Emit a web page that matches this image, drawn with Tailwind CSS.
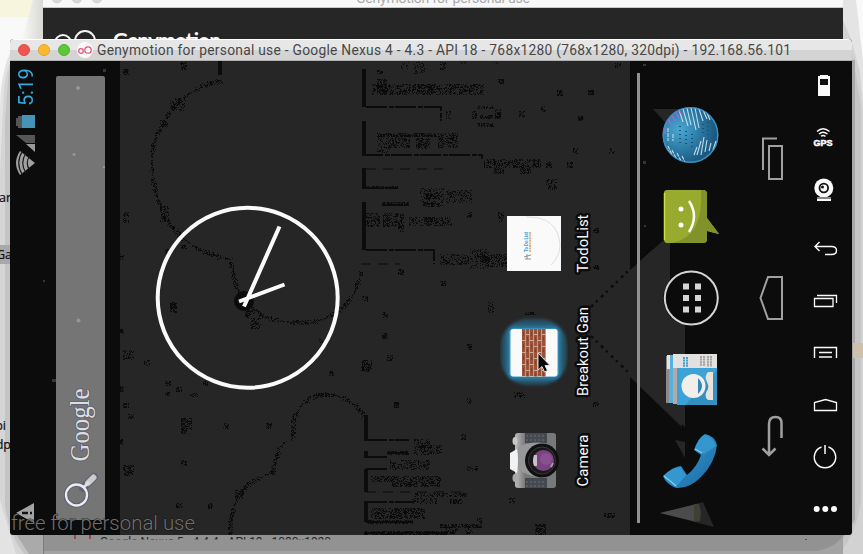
<!DOCTYPE html>
<html lang="en">
<head>
<meta charset="utf-8">
<title>Genymotion for personal use</title>
<script src="https://cdn.jsdelivr.net/npm/@tailwindcss/browser@4"></script>
</head>
<body class="overflow-hidden">
<main class="relative w-[863px] h-[554px] overflow-hidden bg-[#f9f9f9] font-['Roboto','Liberation_Sans',sans-serif]">

  <!-- desktop behind the windows, with stepped shadows -->
  <svg class="absolute inset-0" width="863" height="554" viewBox="0 0 863 554">
    <defs>
      <linearGradient id="fade" x1="0" x2="1"><stop offset="0" stop-color="#f8f8f4"/><stop offset="1" stop-color="#d8d8d5"/></linearGradient>
    </defs>
    <path d="M0 0H36L33 17H0Z" fill="#f8f5de"/>
    <path d="M33 0H43V39H22Z" fill="url(#fade)"/>
    <path d="M20 39Q7 52 3 76Q0 90 0 110V554H43V39Z" fill="#e3e3e3"/>
    <path d="M22 39Q7 58 4 90L0 170V500L16 554H43V39Z" fill="#d5d5d5"/>
    <path d="M5 120V505Q9 535 24 554H43V70H9Z" fill="#c4c4c4"/>
    <path d="M10 525L29 554H43V535Z" fill="#aaa"/>
    <path d="M843 0H856L863 60V554H843Z" fill="#e4e4e4"/>
    <path d="M843 20L851 39L860 72L863 110V554H843Z" fill="#d2d2d2"/>
    <path d="M852 52L861 105V500Q857 530 843 549Z" fill="#c6c6c6"/>
    <path d="M852 60H855V520L843 538Z" fill="#a9a9a9"/>
    <rect x="853" y="343" width="10" height="15" fill="#cdc1ac"/>
    <rect x="0" y="245" width="10" height="19" fill="#a8a8a8"/>
    <g font-family="Open Sans, sans-serif" font-size="12.500" fill="#0c0c0c" stroke="#0c0c0c" stroke-width=".2">
      <text x="11" y="202" text-anchor="end">ar</text><text x="12" y="259" text-anchor="end">Ga</text>
      <text x="6" y="430" text-anchor="end">pi</text><text x="11" y="449" text-anchor="end">dp</text>
    </g>
  </svg>

  <!-- launcher window in the background -->
  <section class="absolute left-[43px] top-0 w-[800px] h-[554px] flex flex-col bg-[#262626]">
    <header class="relative h-2 shrink-0 bg-[#f8f8f8] border-b border-[#c8c8c8] overflow-hidden">
      <svg class="block" width="800" height="8" viewBox="43 0 800 8">
        <g fill="#d8d8d8" stroke="#c4c4c4" stroke-width=".6"><circle cx="57" cy="-2" r="5"/><circle cx="77" cy="-2" r="5"/><circle cx="97" cy="-2" r="5"/></g>
        <text x="356" y="3" font-size="14" fill="#aaa" textLength="174">Genymotion for personal use</text>
      </svg>
    </header>
    <svg class="block shrink-0" width="800" height="31" viewBox="43 8 800 31">
      <g fill="none" stroke="#f5f5f5" stroke-width="2"><circle cx="63" cy="43" r="8"/><circle cx="85" cy="41" r="10"/></g>
      <text x="113" y="47.500" font-family="Lato, sans-serif" font-weight="700" font-size="21" fill="#f7f7f7" textLength="108">Genymotion</text>
    </svg>
    <div class="grow"></div>
    <div class="h-[19px] bg-[#929292] border-l border-[#7d7d7d]">
      <svg class="block" width="799" height="19" viewBox="44 535 799 19">
        <rect x="43" y="551" width="800" height="3" fill="#a3a3a3"/>
        <path d="M843 535Q835 551 800 553H843Z" fill="#a3a3a3"/>
        <path d="M75 535v4M90 535v4" stroke="#a3454f" stroke-width="2"/>
        <svg x="43" y="535" width="400" height="4.500" viewBox="43 535 400 4.500"><text x="100" y="546" font-size="12" fill="#252525" textLength="231">Google Nexus 5 - 4.4.4 - API 19 - 1080x1920</text></svg>
        <rect x="805" y="539" width="2" height="1" fill="#555"/>
      </svg>
    </div>
  </section>

  <!-- emulator window -->
  <section class="absolute left-[10px] top-[39px] w-[842px] h-[496px] flex flex-col rounded-t-[4px] rounded-b-[3px] overflow-hidden bg-[#0c0c0c]">
    <header class="h-[22px] shrink-0 flex items-center pl-[8px] border-t border-white border-b border-b-[#b1b1b1] bg-linear-to-b from-[#e7e7e7] from-50% to-[#d4d4d4] to-50%">
      <div class="flex gap-2">
        <i class="size-3 rounded-full bg-[#f05650] border border-[#df4a45]"></i>
        <i class="size-3 rounded-full bg-[#fbb92f] border border-[#e4a42c]"></i>
        <i class="size-3 rounded-full bg-[#5dc83a] border border-[#50b230]"></i>
      </div>
      <svg class="ml-[7px] shrink-0" width="16" height="16" viewBox="0 0 16 16"><circle cx="8" cy="8" r="8" fill="#fafafa"/><g fill="none" stroke="#dc5a7d" stroke-width="1.300"><circle cx="4" cy="9" r="2.300"/><circle cx="11" cy="8" r="3.200"/></g></svg>
      <svg class="ml-[4px] block shrink-0" width="710" height="20" viewBox="97 40 710 20"><text x="97" y="55" font-size="13.800" fill="#474747" textLength="694">Genymotion for personal use - Google Nexus 4 - 4.3 - API 18 - 768x1280 (768x1280, 320dpi) - 192.168.56.101</text></svg>
    </header>

    <div class="relative grow flex">
      <!-- wallpaper -->
      <svg class="absolute inset-0" width="842" height="474" viewBox="10 61 842 474">
        <rect x="120" y="61" width="510" height="474" fill="#262626"/>
        <path d="M630 269L664 240H670V318H685V430L630 377Z" fill="#262626"/>
        <path d="M653 109H690V150ZM675 440L685 442V458Z" fill="#262626"/>
        <path d="M660 513L703 502L714 527Z" fill="#262626"/><path d="M660 513L693 505L698 505V521L693 521Z" fill="#4b4b4b"/><path d="M694 504h5l2 8-1 9-6 1Z" fill="#3f3f34"/>
        <g fill="none" stroke="#0b0b0b">
          <path stroke-width="4" d="M364 69V107M364 121V155M364 168V188M364 202V250M366 415V441M366 451V458M366 469V492M366 501V522M220 61V75"/>
          <path stroke-width="2" stroke-dasharray="21 2 5 1" d="M366 107H441V121M362 155H482V159M362 188H398M382 205H409M366 250H434V264M366 440H409M387 453H409M366 457H388M366 469H388M366 502H414M366 522H413M364 533H445"/>
          <path stroke-width="1" stroke-dasharray="10 7" d="M366 169H443M361 264H400M366 492H467"/>
        </g>
        <g fill="none" id="contours">
          <path d="M222 80Q182 88 165 120C149 143 149 164 155 190Q160 212 169 223Q185 243 205 252Q220 257 230 259L233 275L241 298C260 321 287 325 315 321Q353 311 361 271"/>
          <path d="M293 438V420C299 402 311 394 328 394Q354 396 366 420"/>
          <path d="M230 535C229 508 238 486 260 477L273 472Q276 448 286 440"/>
        </g>
        <path fill="none" stroke="#0b0b0b" stroke-width="2.500" stroke-dasharray="3 4 2 5" d="M591 307L630 269M591 336L630 374"/>
        <path fill="none" stroke="#0b0b0b" stroke-width="2" d="M653 247L630 269M682 425L685 430"/>
        <circle cx="244" cy="301" r="10" fill="#0b0b0b"/>
        <path id="grain" fill="#0b0b0b" shape-rendering="crispEdges"/>
        <g fill="#353535"><path d="M103 69h3v3h-3zM52 379h4v3h-4zM643 64h3v2h-3zM643 161h3v3h-3zM43 280h2v2h-2zM644 225h2v2h-2z"/></g>
      </svg>

      <!-- status bar -->
      <aside class="relative w-[46px] flex flex-col pl-[5px] pt-[6px] items-start">
        <time class="h-[40px] w-[22px] flex items-center justify-center [writing-mode:vertical-rl] rotate-180 text-[20px] leading-[22px] text-[#35a9da] tracking-[-0.3px]">5:19</time>
        <svg class="mt-[7px]" width="22" height="64" viewBox="15 114 22 64">
          <path d="M16 118h2v-2h4v12h-4v-2h-2z" fill="#555"/><rect x="22" y="115" width="13" height="13" fill="#4594b8"/>
          <path d="M16 135H35V143H26Z" fill="#565656"/><path d="M26 144H35V152Z" fill="#999"/>
          <path d="M20 151Q12 163 20 175L35 163Z" fill="#a0a0a0"/>
          <g fill="none" stroke="#1a1a1a" stroke-width="1.200"><path d="M22.500 151Q15 163 22.500 175M26 153Q19.500 163 26 173M29.500 156Q25 163 29.500 170"/></g>
        </svg>
        <svg class="mt-[323px]" width="20" height="22" viewBox="15 501 20 22"><path d="M16 513L34 503V523Z" fill="#a3a3a3"/><path d="M22 513H28M30 513H32" stroke="#111" stroke-width="2.500"/></svg>
      </aside>

      <!-- search bar -->
      <div class="relative w-[49px] h-[444px] mt-[15px] bg-[#757575] rounded-t-[2px]">
        <svg class="block" width="49" height="444" viewBox="56 76 49 444">
          <g fill="#969696"><circle cx="78" cy="88" r="2"/><circle cx="74" cy="154.500" r="1.600"/><circle cx="78.500" cy="320.500" r="2"/><rect x="103" y="166" width="2" height="2"/></g>
          <g transform="translate(88.500 461.500) rotate(-90)"><text font-family="Liberation Serif, serif" font-size="27" fill="#dedede" stroke="#5e6277" stroke-width="2" paint-order="stroke" textLength="73" lengthAdjust="spacingAndGlyphs">Google</text></g>
          <path d="M83 488L94 477" stroke="#5e6277" stroke-width="8" stroke-linecap="round"/><circle cx="76.500" cy="495" r="10.500" fill="none" stroke="#5e6277" stroke-width="4.500"/>
          <path d="M88 483L93.500 477.500" stroke="#ccc" stroke-width="6" stroke-linecap="round"/><path d="M84 487L89 482" stroke="#ddd" stroke-width="3"/><circle cx="76.500" cy="495" r="10.500" fill="none" stroke="#ededed" stroke-width="2.300"/>
        </svg>
      </div>

      <!-- home screen -->
      <div class="relative ml-[15px] w-[510px] flex">
        <svg class="ml-[35px] mt-[144px]" width="186" height="186" viewBox="155 205 186 186"><g fill="none" stroke="#fafafa"><circle cx="247.700" cy="297.800" r="90" stroke-width="4"/><path stroke-width="4" d="M244 306.500L279.500 226.500M239 301.500L284.500 284.500"/></g></svg>
        <div class="ml-[159px] mt-[155px] flex flex-col w-[68px]">
          <svg class="ml-[7px] block" width="56" height="56" viewBox="507 216 56 56">
            <rect x="507" y="216" width="54" height="55" fill="#fafafa"/><path d="M526 217Q558 216 560 245Q560 256 551 265" fill="none" stroke="#dedede"/>
            <text transform="translate(527.500 252) rotate(-90)" font-size="4.500" font-weight="700" fill="#31a1d8" textLength="20" lengthAdjust="spacingAndGlyphs">To Do List</text><path d="M530 232V252" stroke="#e7ae89" stroke-width="2" stroke-dasharray="2 .6"/>
            <path d="M524 257l7-2M525 259h6M527 254v5" stroke="#92918a" stroke-width="1"/>
          </svg>
          <svg class="mt-[44px] block" width="68" height="72" viewBox="500 316 68 72">
            <defs>
              <filter id="b"><feGaussianBlur stdDeviation="1.500"/></filter>
              <pattern id="brick" x="522" y="329" width="8" height="12" patternUnits="userSpaceOnUse"><rect width="8" height="12" fill="#c9ab9c"/><path d="M0 0h3.200v11h-3.200zM4 0h3.200v5h-3.200zM4 6h3.200v6h-3.200z" fill="#9b5138"/><path d="M1 3h1v4h-1zM5 8h1v3h-1z" fill="#804130"/></pattern>
            </defs>
            <rect x="501" y="319" width="66" height="66" rx="26" fill="#264e61" filter="url(#b)"/><rect x="505" y="324" width="58" height="57" rx="15" fill="#286381" filter="url(#b)"/><rect x="508" y="327" width="52" height="52" rx="6" fill="#2f7ca3" filter="url(#b)"/>
            <rect x="509.500" y="328.500" width="49" height="48.500" rx="4" fill="#42a1cd"/><rect x="510.500" y="329" width="47" height="47.500" rx="3" fill="#fafafa"/><rect x="522" y="329" width="24" height="47.500" fill="url(#brick)"/>
            <path d="M538 353V370L542 366.500L544.500 372L547.500 370.500L545 365.500H550Z" fill="#090909" stroke="#eee" stroke-width=".9"/>
          </svg>
          <svg class="mt-[44px] ml-[7px] block" width="56" height="58" viewBox="507 432 56 58">
            <defs><linearGradient id="cam"><stop offset="0" stop-color="#bcbcbc"/><stop offset=".25" stop-color="#777"/><stop offset="1" stop-color="#77797c"/></linearGradient></defs>
            <rect x="515" y="433" width="41" height="55" rx="3" fill="url(#cam)"/><path d="M525 433h22v10h-22zM525 478h22v10h-22z" fill="#44484f"/>
            <path d="M526 436h20M526 440h20M526 482h20M526 486h20" stroke="#6b7180" stroke-dasharray="2 2"/>
            <ellipse cx="515" cy="441" rx="2.500" ry="4" fill="#c7c7c7"/><ellipse cx="515" cy="478" rx="2.500" ry="4" fill="#aaa"/>
            <path d="M518 447Q530 441 545 443V478Q527 477 517 468Z" fill="#96989a"/><path d="M510 453L517 449Q519 460 517 473L510 469Z" fill="#f2f2f2"/>
            <circle cx="542" cy="460.500" r="17" fill="#101010"/><circle cx="542" cy="460.500" r="13.500" fill="#191919" stroke="#3a3a3a"/><circle cx="543.500" cy="460.500" r="10.500" fill="#7a4380"/><circle cx="546" cy="459" r="6" fill="#88508f"/><path d="M534 455h3v11h-3q-2-5 0-11" fill="#c9bfca"/><path d="M551 467l2-4" stroke="#a79bb0" stroke-width="2"/>
          </svg>
        </div>
        <svg class="absolute left-[452px] top-[144px]" width="24" height="290" viewBox="572 205 24 290">
          <g font-size="15" fill="#fafafa" stroke="#0b0b0b" stroke-width="5" stroke-linejoin="round" paint-order="stroke">
            <text transform="translate(587.500 272.500) rotate(-90)" textLength="58" lengthAdjust="spacingAndGlyphs">TodoList</text>
            <text transform="translate(587.500 396) rotate(-90)" textLength="89" lengthAdjust="spacingAndGlyphs">Breakout Gan</text>
            <text transform="translate(587.500 486.500) rotate(-90)" textLength="52" lengthAdjust="spacingAndGlyphs">Camera</text>
          </g>
        </svg>
      </div>

      <!-- favourites tray -->
      <div class="relative w-[115px] flex pl-[7px] pt-[12px]">
        <div class="w-[3px] h-[450px] bg-[#929292]"></div>
        <div class="ml-[20px] pt-[32px] flex flex-col">
          <svg class="block" width="62" height="62" viewBox="660 105 62 62">
            <defs><radialGradient id="gl" cx=".3" cy=".4" r=".75"><stop offset="0" stop-color="#4ba9d4"/><stop offset=".5" stop-color="#2b79a4"/><stop offset="1" stop-color="#164b70"/></radialGradient><clipPath id="gc"><circle cx="690.500" cy="135" r="27"/></clipPath></defs>
            <circle cx="690.500" cy="135" r="28" fill="url(#gl)"/><circle cx="690.500" cy="135" r="27.200" fill="none" stroke="#3c8fbe" stroke-width="1.500"/>
            <g clip-path="url(#gc)" fill="none" stroke="#c3dcea" stroke-width="1.100">
              <path d="M683 109l5 17M687 108l4 17M691 108l5 22M695 108l4 20M699 109l4 12M703 110l4 9M707 113l3 7M679 110l4 12"/>
              <path d="M665 146l5 7M668 146l5 11M672 150l5 10M677 153l4 8M682 156l3 6M668 128v13M673 134v7" stroke-dasharray="4 1"/>
              <path d="M694 155l3-8M697 155l4-14M701 155l3-18M705 152l2-12M709 151l2-8M713 150l3-9"/>
              <path stroke="#b964d6" d="M667 118l4 6M671 114l4 7M675 111l4 7M679 110l3 5M665 126v8"/>
            </g>
            <path d="M680 126v18M686 131v16M692 134v14M708 122v15M703 124v10" stroke="#15547c" stroke-width="2" stroke-dasharray="1 3"/>
          </svg>
          <svg class="mt-[21px] block" width="62" height="57" viewBox="660 188 62 57">
            <path d="M667 190H703Q707 190 707 194V218L719 234L707 231V239Q707 243 703 243H667Q664 243 664 239V193Q664 190 667 190Z" fill="#98ab2e"/>
            <path d="M703 190Q707 190 707 194V218L719 234L707 231V239Q707 243 703 243H672Q704 237 701 190Z" fill="#82922b"/><path d="M664.500 193V240" stroke="#c8e044" stroke-width="1.500"/>
            <circle cx="681" cy="209" r="2.500" fill="#fff"/><circle cx="681" cy="225" r="2.500" fill="#fff"/><path d="M689 201Q699 216 689 232" fill="none" stroke="#fff" stroke-width="2.500"/>
          </svg>
          <svg class="mt-[24px] block" width="62" height="59" viewBox="660 269 62 59">
            <circle cx="691.300" cy="298" r="28" fill="#0b0b0b"/><circle cx="691.300" cy="298" r="26.500" fill="none" stroke="#d5d5d5" stroke-width="2"/>
            <path d="M683 283.500h6v6h-6zM695 283.500h6v6h-6zM683 295h6v6h-6zM695 295h6v6h-6zM683 306.500h6v6h-6zM695 306.500h6v6h-6z" fill="#d5d5d5"/>
          </svg>
          <svg class="mt-[24px] block" width="62" height="56" viewBox="660 352 62 56">
            <path d="M666 356h4v47h-4z" fill="#8f8a88"/><path d="M669 355h5v48h-5z" fill="#55b2dd"/><path d="M673 354h5v50h-5z" fill="#b6a8a4"/><path d="M667 355h3v14h-3zM673 354h7v14h-7z" fill="#e3e3e3"/>
            <path d="M677 354H717V405H677Z" fill="#3da3d7"/><path d="M677 354H717V368H677Z" fill="#e2e1df"/><path d="M717 370V405H685Z" fill="#3590c2"/>
            <path d="M684 357V367M687 357V367" stroke="#2c92c8" stroke-width="1.700" stroke-dasharray="2 .6"/><path d="M701 356V366M704 356V366M708 356V367M711 356V367" stroke="#77797a" stroke-width="1.200" stroke-dasharray="2 .6"/>
            <circle cx="693.500" cy="386" r="12" fill="#f0efeb"/><path d="M698 378Q706 386 698 394Z" fill="#3589b8"/><path d="M708 372H713V400H708Q703 396 708 389Q709 386 707 382Q704 376 708 372" fill="#e7e2da"/>
          </svg>
          <svg class="mt-[24px] block" width="62" height="60" viewBox="660 432 62 60">
            <defs><linearGradient id="ph" x1="0" y1="0" x2="1" y2="1"><stop offset="0" stop-color="#51bdea"/><stop offset=".5" stop-color="#2984bd"/><stop offset="1" stop-color="#1e6aa3"/></linearGradient></defs>
            <path d="M705 434Q715 436 717 445Q715 463 701 477Q689 489 676 488Q666 484 663 476Q672 467 681 466L687 475Q697 467 701 455L694 450Q698 438 705 434Z" fill="url(#ph)"/>
            <path d="M695 449Q699 437 705 435Q713 437 716 446L704 454ZM664 476Q672 468 680 467L686 475L676 487Z" fill="#3597d0"/><path d="M664 476L676 486M695 449L702 453" stroke="#79d3f2" stroke-width="1.300"/>
          </svg>
        </div>
      </div>

      <!-- device navigation -->
      <nav class="relative w-[52px] flex flex-col items-center pt-[75px]">
        <svg class="block" width="26" height="46" viewBox="758 136 26 46"><path d="M763 170V138.500H777M769 146H782V179H769Z" fill="none" stroke="#a0a0a0" stroke-width="2"/></svg>
        <svg class="mt-[92px] block" width="28" height="48" viewBox="757 274 28 48"><path d="M768 277H782V319H768L760.500 298Z" fill="none" stroke="#a0a0a0" stroke-width="2"/></svg>
        <svg class="mt-[92px] block" width="26" height="46" viewBox="758 414 26 46"><path d="M781.500 438V423Q781.500 417 775.500 417Q769 417 769 424V455M762.500 448.500L769 455L775.500 448.500" fill="none" stroke="#a0a0a0" stroke-width="2.500"/></svg>
      </nav>

      <!-- emulator toolbar -->
      <aside class="relative grow flex flex-col items-center pt-[13px]">
        <svg class="block" width="32" height="24" viewBox="809 74 32 24"><path d="M820 75h8v1h2v20h-12v-20h2z" fill="#fafafa"/><rect x="820" y="79" width="8" height="6" fill="#101010"/></svg>
        <svg class="mt-[28px] block" width="32" height="22" viewBox="809 126 32 22"><g fill="none" stroke="#fafafa" stroke-width="1.500"><path d="M817 131.500Q823 126 829.500 131.500M819 134Q823 130.500 827.500 134M821 136.300Q823 134.500 825.500 136.300"/></g><text x="813.500" y="145.500" font-family="Liberation Sans" font-size="8.500" font-weight="700" fill="#fafafa" stroke="#fafafa" stroke-width=".5" textLength="19" lengthAdjust="spacingAndGlyphs">GPS</text></svg>
        <svg class="mt-[29px] block" width="32" height="26" viewBox="809 177 32 26"><circle cx="823.800" cy="188" r="9.500" fill="#fafafa"/><circle cx="823.800" cy="188" r="4.300" fill="none" stroke="#111" stroke-width="1.800"/><circle cx="822.500" cy="187" r="1.500" fill="#111"/><path d="M817 197H831V201H817Z" fill="#fafafa"/><path d="M816 198H832" stroke="#111"/></svg>
        <svg class="mt-[36px] block" width="32" height="20" viewBox="809 239 32 20"><path d="M815 246.500H831.500Q836.500 246.500 836.500 250.500Q836.500 254.500 831.500 254.500H825M819.500 242L815 246.500L819.500 251" fill="none" stroke="#fafafa" stroke-width="1.400"/></svg>
        <svg class="mt-[34px] block" width="32" height="18" viewBox="809 293 32 18"><path d="M814.500 298.500H833V306.500H814.500ZM817 295.500H836.500V303" fill="none" stroke="#fafafa" stroke-width="1.300"/></svg>
        <svg class="mt-[33px] block" width="32" height="18" viewBox="809 344 32 18"><path d="M814.500 358V347.500H836.500V358M819 352.500H832M819 357H832" fill="none" stroke="#fafafa" stroke-width="1.400"/></svg>
        <svg class="mt-[34px] block" width="32" height="20" viewBox="809 396 32 20"><path d="M814.500 410.500V402.500L825.500 399.500L836.500 402.500V410.500Z" fill="none" stroke="#fafafa" stroke-width="1.300"/></svg>
        <svg class="mt-[27px] block" width="32" height="28" viewBox="809 443 32 28"><path d="M821.500 447A10.700 10.700 0 1 0 828.500 447M825 445V454" fill="none" stroke="#fafafa" stroke-width="1.500"/></svg>
        <svg class="mt-[32px] block" width="32" height="12" viewBox="809 503 32 12"><g fill="#fafafa"><circle cx="816.700" cy="509" r="3"/><circle cx="825.300" cy="509" r="3"/><circle cx="834" cy="509" r="3"/></g></svg>
      </aside>

      <svg class="absolute left-0 top-[445px]" width="220" height="29" viewBox="10 506 220 29"><text x="11" y="530" font-size="20" font-weight="300" fill="#707070" stroke="#0b0b0b" stroke-width="1.500" stroke-opacity=".5" paint-order="stroke" textLength="184" lengthAdjust="spacingAndGlyphs">free for personal use</text></svg>
    </div>
  </section>
</main>
<script>
  // Speckled wallpaper patches: x, y, width, height, density
  const patches = [
    [372,84,112,11,.42],[377,79,10,15,.6],[417,84,18,10,.45],[377,70,6,4,.6],[401,62,8,7,.3],[414,62,11,12,.35],[440,62,6,8,.4],[460,61,7,3,.4],[494,61,5,3,.5],
    [477,106,17,3,.5],[472,111,5,8,.5],[495,109,6,10,.6],[480,115,13,4,.6],[477,123,17,4,.6],[446,111,5,8,.25],[519,111,6,6,.5],[498,79,6,5,.6],[557,90,6,6,.6],[541,106,5,6,.5],
    [377,133,60,4,.65],[377,137,13,16,.3],[390,137,20,11,.4],[416,138,14,11,.5],[438,133,20,15,.45],[484,159,57,9,.42],[493,168,11,6,.6],[520,168,11,6,.5],[546,162,6,6,.5],[567,162,6,6,.5],[546,179,11,6,.5],[573,148,5,6,.6],
    [362,186,36,3,.55],[382,202,27,4,.6],[420,188,24,18,.25],[425,193,14,6,.65],[424,203,16,4,.5],[446,190,26,13,.35],[362,213,18,14,.4],[383,213,21,14,.45],[398,226,6,6,.6],[409,217,43,9,.35],[425,217,8,5,.7],
    [440,254,29,11,.4],[470,249,19,20,.3],[480,256,10,6,.7],[490,254,17,13,.45],[398,269,6,6,.6],[440,281,6,5,.6],[362,296,6,6,.5],[488,302,6,11,.5],[467,212,5,6,.6],[498,212,6,10,.5],
    [382,312,6,6,.5],[382,333,6,6,.6],[387,355,6,6,.5],[362,360,10,10,.45],[467,344,5,6,.6],[524,312,12,3,.5],
    [414,439,16,16,.35],[419,445,7,3,.8],[430,445,12,9,.4],[387,451,22,4,.5],[390,460,40,10,.35],[371,476,70,6,.42],[392,482,49,5,.5],[412,493,55,4,.4],[412,498,25,6,.35],[450,499,13,5,.6],[371,508,54,11,.48],[366,520,47,4,.45],[440,524,42,4,.6],[446,528,12,6,.4],[465,528,8,6,.4],[535,524,11,11,.55],[364,531,84,4,.65],
    [394,402,5,6,.8],[467,398,5,6,.5],[514,392,11,6,.4],[461,434,5,6,.6],[467,466,11,5,.6],[509,498,6,6,.5],[477,518,5,6,.5],[361,366,10,6,.5],[318,393,18,4,.5],[329,371,5,5,.5],
    [123,69,6,6,.6],[180,62,7,8,.55],[170,98,15,13,.3],[160,120,8,7,.5],[123,212,6,11,.4],[120,254,4,6,.5],[165,249,5,6,.5],[181,245,6,4,.6],[160,206,9,16,.4],[170,302,7,11,.6],[120,329,4,5,.6],[123,349,11,11,.35],[144,360,6,6,.4],[250,318,11,11,.4],[245,310,6,8,.6],[319,339,4,4,.5],
    [120,386,4,6,.6],[165,381,6,5,.6],[165,392,6,4,.6],[176,387,6,5,.5],[190,393,8,4,.5],[203,381,5,5,.5],[123,403,6,5,.6],[128,414,6,5,.5],[181,418,11,12,.5],[181,428,6,6,.6],[223,423,6,6,.5],[266,423,6,6,.5],[120,439,3,6,.6],[181,460,6,6,.6],[123,465,11,11,.55],[176,503,6,5,.6],[208,503,5,6,.5],[271,471,5,4,.5],[235,490,9,9,.35],
    [593,228,6,5,.6],[593,265,6,5,.6],[578,116,6,5,.7],[588,90,6,5,.7],[615,63,6,5,.5],[609,148,6,6,.3],[593,402,6,5,.7],[604,513,11,5,.5],[548,185,9,5,.5]
  ];
  let seed = 7, d = "";
  const next = () => (seed = (seed * 16807) % 2147483647) / 2147483647;
  const dot = (x, y) => { d += `M${Math.round(x)} ${Math.round(y)}h1v1h-1z`; };
  for (const [x, y, w, h, k] of patches)
    for (let j = 0; j < h; j++)
      for (let i = 0; i < w; i++)
        if (next() < k) dot(x + i, y + j);
  // Rough outlines of the wallpaper shapes
  for (const p of document.querySelectorAll("#contours path")) {
    const len = p.getTotalLength();
    for (let s = 0; s < len; s += 0.3) {
      const a = p.getPointAtLength(s);
      const heavy = Math.sin(s / 7) + Math.sin(s / 3.1) > -0.3;
      const spread = heavy ? 4.5 : 1.5;
      if (next() < (heavy ? 0.9 : 0.3)) dot(a.x + (next() - 0.5) * spread, a.y + (next() - 0.5) * spread);
    }
  }
  document.getElementById("grain").setAttribute("d", d);
</script>
</body>
</html>
